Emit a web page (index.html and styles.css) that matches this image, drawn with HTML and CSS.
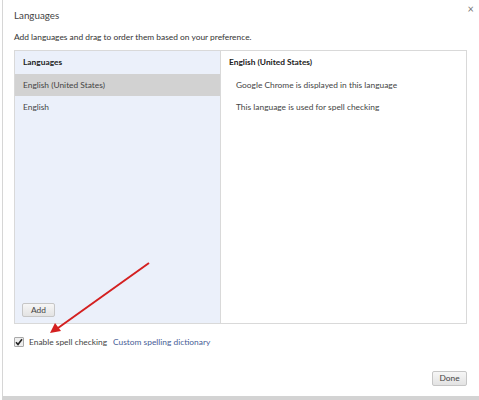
FILE: index.html
```html
<!DOCTYPE html>
<html>
<head>
<meta charset="utf-8">
<link rel="stylesheet" href="styles.css">
</head>
<body>
<div class="dialog">
  <div class="titlebar">
    <div class="title">Languages</div>
    <div class="close">×</div>
  </div>
  <div class="subtitle">Add languages and drag to order them based on your preference.</div>
  <div class="panel">
    <div class="leftcol">
      <div class="lhead">Languages</div>
      <div class="lrow selected">English (United States)</div>
      <div class="lrow">English</div>
      <div class="spacer"></div>
      <div class="addwrap"><span class="btn add">Add</span></div>
    </div>
    <div class="rightcol">
      <div class="rhead">English (United States)</div>
      <div class="rline">Google Chrome is displayed in this language</div>
      <div class="rline">This language is used for spell checking</div>
    </div>
  </div>
  <div class="checkrow">
    <span class="checkbox"><svg width="8" height="8" viewBox="0 0 8 8"><path d="M1 4.2 L3 6.5 L7 1.2" fill="none" stroke="#222" stroke-width="1.6"/></svg></span>
    <span class="label">Enable spell checking</span>
    <span class="link">Custom spelling dictionary</span>
  </div>
  <div class="footer"><span class="btn done">Done</span></div>
</div>
<svg class="arrow" width="479" height="400" viewBox="0 0 479 400">
  <line x1="149" y1="263" x2="58" y2="328" stroke="#d42020" stroke-width="2"/>
  <polygon points="50,333 55,323 61,331" fill="#d42020"/>
</svg>
</body>
</html>
```
FILE: styles.css
```css
html, body {
  margin: 0;
  padding: 0;
  background: #ffffff;
}
body {
  width: 479px;
  height: 400px;
  overflow: hidden;
  position: relative;
  font-family: Lato, "Open Sans", sans-serif;
  font-size: 8.4px;
  color: #333333;
}
.dialog {
  margin-left: 2px;
  height: 396px;
  border-left: 1px solid #d6d6d6;
  border-bottom: 4px solid #d3d3d3;
  padding: 0 12px 0 11px;
  display: flex;
  flex-direction: column;
}
.titlebar {
  display: flex;
  justify-content: space-between;
  align-items: flex-start;
  height: 30px;
}
.title {
  font-size: 9.8px;
  color: #444;
  margin-top: 8px;
  line-height: 14px;
}
.close {
  font-size: 11px;
  color: #777;
  margin-top: 2px;
  margin-right: -7px;
  line-height: 14px;
}
.subtitle {
  line-height: 14px;
  height: 14px;
  margin-bottom: 6px;
}
.panel {
  display: flex;
  height: 272px;
  border: 1px solid #d9d9d9;
}
.leftcol {
  width: 205px;
  background: #ebf0fa;
  border-right: 1px solid #d9d9d9;
  display: flex;
  flex-direction: column;
}
.lhead {
  height: 23px;
  line-height: 23px;
  padding-left: 8px;
  font-weight: bold;
  color: #222;
}
.lrow {
  height: 22px;
  line-height: 22px;
  padding-left: 8px;
  color: #444;
}
.selected {
  background: #d2d2d2;
}
.spacer { flex: 1; }
.addwrap {
  padding: 0 0 6px 7px;
}
.btn {
  display: inline-block;
  border: 1px solid #c6c6c6;
  border-radius: 2px;
  background: linear-gradient(#f6f6f6, #e3e3e3);
  color: #444;
  text-align: center;
  box-sizing: border-box;
}
.add {
  width: 33px;
  height: 14px;
  line-height: 12px;
}
.rightcol {
  flex: 1;
  background: #fff;
}
.rhead {
  height: 23px;
  line-height: 23px;
  padding-left: 8px;
  font-weight: bold;
  color: #222;
}
.rline {
  height: 22px;
  line-height: 22px;
  padding-left: 15px;
  color: #444;
}
.checkrow {
  display: flex;
  align-items: center;
  margin-top: 12px;
  height: 12px;
}
.checkbox {
  width: 8px;
  height: 8px;
  border: 1px solid #a9a9a9;
  border-radius: 1px;
  background: #eee;
  display: flex;
  align-items: center;
  justify-content: center;
}
.label {
  margin-left: 5px;
  color: #444;
}
.link {
  margin-left: 6px;
  color: #475d96;
}
.footer {
  flex: 1;
  display: flex;
  justify-content: flex-end;
  align-items: flex-end;
  padding-bottom: 10px;
}
.done {
  width: 35px;
  height: 15px;
  line-height: 13px;
}
.arrow {
  position: absolute;
  left: 0;
  top: 0;
  pointer-events: none;
}
```
